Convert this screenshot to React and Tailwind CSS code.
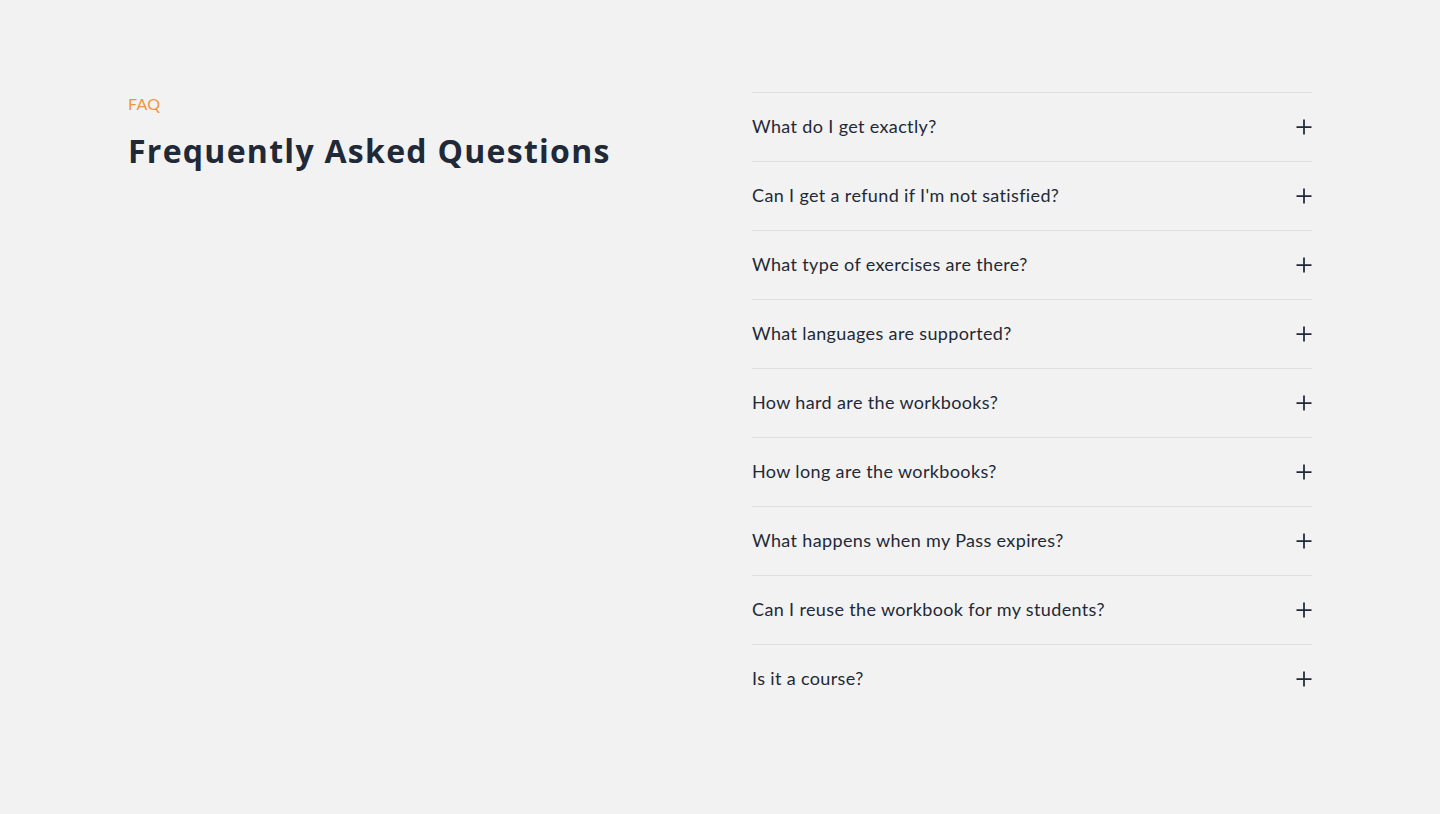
import React, { useState } from "react";

const questions = [
  "What do I get exactly?",
  "Can I get a refund if I'm not satisfied?",
  "What type of exercises are there?",
  "What languages are supported?",
  "How hard are the workbooks?",
  "How long are the workbooks?",
  "What happens when my Pass expires?",
  "Can I reuse the workbook for my students?",
  "Is it a course?",
];

const PlusIcon = () => (
  <svg
    width="16"
    height="16"
    viewBox="0 0 16 16"
    fill="none"
    stroke="#1f2937"
    strokeWidth="1.75"
    className="translate-y-px"
  >
    <path d="M8 0.5v15M0.5 8h15" />
  </svg>
);

const App = () => {
  const [open, setOpen] = useState(null);

  return (
    <div className="min-h-screen bg-[#f2f2f2] font-['Lato',sans-serif]">
      <div className="mx-auto grid max-w-[1184px] grid-cols-2 gap-16 pt-[92px]">
        <div>
          <p className="text-base leading-6 tracking-[0.02em] text-[#f0953f]">FAQ</p>
          <h2 className="mt-[15px] font-['Open_Sans',sans-serif] text-[32px] font-bold leading-10 tracking-[0.04em] text-[#1f2937]">
            Frequently Asked Questions
          </h2>
        </div>

        <div>
          {questions.map((q, i) => (
            <div key={q} className="border-t border-[#dedede]">
              <button
                type="button"
                onClick={() => setOpen(open === i ? null : i)}
                className="flex w-full items-center justify-between pt-[19px] pb-[21px] text-left"
              >
                <span className="text-lg leading-7 tracking-[0.02em] text-[#1f2937]">{q}</span>
                <PlusIcon />
              </button>
            </div>
          ))}
        </div>
      </div>
    </div>
  );
};

export default App;
